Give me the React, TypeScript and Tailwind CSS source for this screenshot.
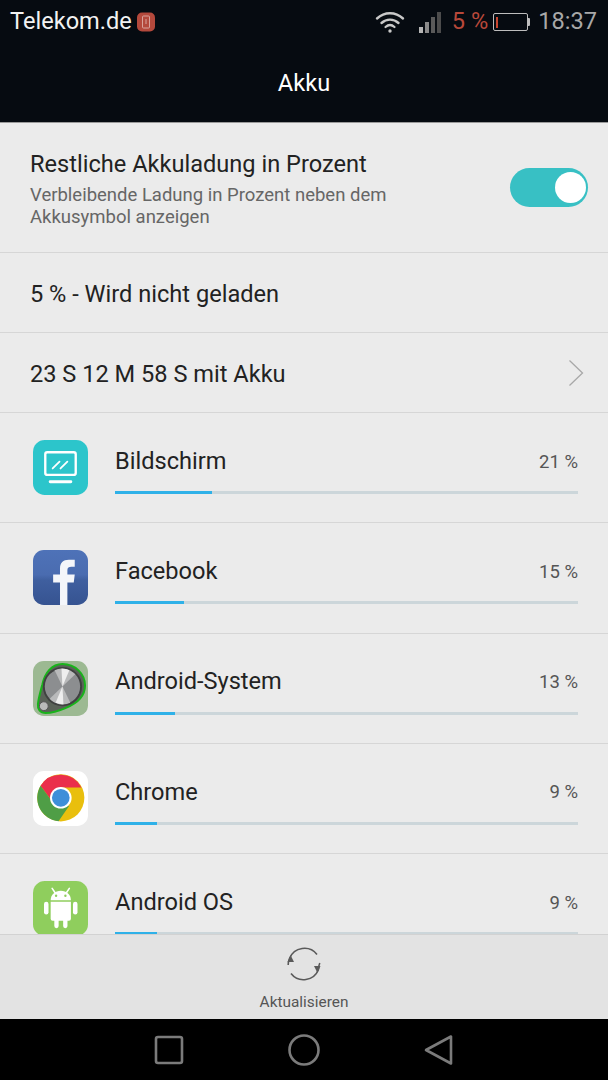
import React from 'react';

type Usage = { name: string; percent: number; bar: string; icon: React.ReactNode };

const BildschirmIcon = () => (
  <svg viewBox="0 0 56 56" className="h-[55px] w-[55px]">
    <rect width="56" height="56" rx="12" fill="#2cc5cb" />
    <rect x="12.500" y="12.500" width="31" height="23" rx="2" fill="none" stroke="#fff" strokeWidth="2.400" />
    <path d="M20 29l7-7M28 29l7-7" stroke="#fff" strokeWidth="1.800" strokeLinecap="round" />
    <rect x="16" y="41" width="24" height="3" rx="1.500" fill="#fff" />
  </svg>
);

const FacebookIcon = () => (
  <svg viewBox="0 0 56 56" className="h-[55px] w-[55px]">
    <defs>
      <linearGradient id="fb" x1="0" y1="0" x2="0" y2="1">
        <stop offset="0" stopColor="#4e72b8" />
        <stop offset="0.45" stopColor="#4a6cb0" />
        <stop offset="0.55" stopColor="#3f5f9f" />
        <stop offset="1" stopColor="#365391" />
      </linearGradient>
    </defs>
    <rect width="56" height="56" rx="11" fill="url(#fb)" />
    <path
      d="M27.500 56V33h-7v-8h7v-6c0-6 3-9 9-9h6v7h-3.500c-2.500 0-4 1-4 3.500V25h7.500l-1 8h-6.500v23z"
      fill="#f4f6fa"
    />
  </svg>
);

const SystemIcon = () => (
  <svg viewBox="0 0 56 56" className="h-[55px] w-[55px]">
    <rect width="56" height="56" rx="11" fill="#9cb992" />
    <path
      d="M30 3c13 0 23 10 23 22 0 13-10 19-20 23-7 3-14 5-20 5-6 0-8.500-4-8-9 .7-7 3-14 4.500-20C12 12 19 3 30 3z"
      fill="#5a6258"
      stroke="#19b31b"
      strokeWidth="2"
    />
    <circle cx="30" cy="26" r="20" fill="#3f4140" />
    <circle cx="30" cy="26" r="18" fill="#8c8e90" />
    {/* brushed metal highlights fan out from the dial centre */}
    <path d="M30 26L22 9.500A18 18 0 0 1 43 13.500z" fill="#b9babb" />
    <path d="M30 26L29 8A18 18 0 0 1 37 9.500z" fill="#eeeeee" />
    <path d="M30 26L38 42.500A18 18 0 0 1 17 38.500z" fill="#b9babb" />
    <path d="M30 26L31 44A18 18 0 0 1 23 42.500z" fill="#eeeeee" />
    <circle cx="11" cy="46" r="4.500" fill="#b9bbb9" stroke="#555" strokeWidth="1" />
  </svg>
);

const ChromeIcon = () => (
  <svg viewBox="0 0 56 56" className="h-[55px] w-[55px]">
    <rect width="56" height="56" rx="11" fill="#fff" />
    <circle cx="28.300" cy="27.300" r="24" fill="#e9bf0d" />
    <path d="M7.700 15A24 24 0 0 1 49.300 16.700H28.300L18 29z" fill="#ea2f4b" />
    <path d="M7.700 15A24 24 0 0 0 26 51.200L36.700 35.700 18 29z" fill="#4f9e46" />
    <circle cx="28.300" cy="27.300" r="11" fill="#fff" />
    <circle cx="28.300" cy="27.300" r="9" fill="#3d8fd9" />
  </svg>
);

const AndroidIcon = () => (
  <svg viewBox="0 0 56 56" className="h-[55px] w-[55px]">
    <rect width="56" height="56" rx="12" fill="#8fce5d" />
    <path d="M19.500 7.500l3 4.500M37 7.500l-3 4.500" stroke="#fff" strokeWidth="1.600" strokeLinecap="round" />
    <path d="M18 19.500c0-5.500 4.500-9.500 10.300-9.500s10.300 4 10.300 9.500z" fill="#fff" />
    <circle cx="23.500" cy="15" r="1.200" fill="#8fce5d" />
    <circle cx="33" cy="15" r="1.200" fill="#8fce5d" />
    <path d="M18 21h20.600v17.500a2 2 0 0 1-2 2H20a2 2 0 0 1-2-2z" fill="#fff" />
    <rect x="11.200" y="21" width="4.600" height="13" rx="2.300" fill="#fff" />
    <rect x="40.700" y="21" width="4.600" height="13" rx="2.300" fill="#fff" />
    <rect x="21.700" y="38" width="4.400" height="10" rx="2.200" fill="#fff" />
    <rect x="30.700" y="38" width="4.400" height="10" rx="2.200" fill="#fff" />
  </svg>
);

const usages: Usage[] = [
  { name: 'Bildschirm', percent: 21, bar: 'w-[21%]', icon: <BildschirmIcon /> },
  { name: 'Facebook', percent: 15, bar: 'w-[15%]', icon: <FacebookIcon /> },
  { name: 'Android-System', percent: 13, bar: 'w-[13%]', icon: <SystemIcon /> },
  { name: 'Chrome', percent: 9, bar: 'w-[9%]', icon: <ChromeIcon /> },
  { name: 'Android OS', percent: 9, bar: 'w-[9%]', icon: <AndroidIcon /> },
];

const StatusBar = () => (
  <div className="flex h-[44px] items-center pl-[10px] pr-[11px]">
    <span className="text-[23.600px] leading-none text-[#f2f2f2]">Telekom.de</span>
    <svg viewBox="0 0 18 20" className="ml-[5px] h-[20px] w-[18px]">
      <rect width="18" height="19" y="0.500" rx="5" fill="#b4493c" />
      <rect x="5.500" y="4" width="7" height="12" rx="1" fill="none" stroke="#d9a49c" strokeWidth="1" />
      <path d="M9 7v5" stroke="#d9a49c" strokeWidth="1" />
    </svg>
    <div className="ml-auto flex items-center">
      <svg viewBox="0 0 30 24" className="h-[24px] w-[30px]" fill="none" stroke="#c9c9c9" strokeLinecap="round">
        <path d="M2 8.500c7.500-7 18.500-7 26 0" strokeWidth="2.400" />
        <path d="M6.500 13c5-4.500 12-4.500 17 0" strokeWidth="2.400" />
        <path d="M10.500 17c2.800-2.500 6.200-2.500 9 0" strokeWidth="2.200" />
        <circle cx="15" cy="21" r="1.700" fill="#c9c9c9" stroke="none" />
      </svg>
      <div className="ml-[14px] flex h-[22px] items-end gap-[2.500px]">
        <span className="h-[6px] w-[3.500px] bg-[#b5b5b5]" />
        <span className="h-[11px] w-[3.500px] bg-[#8a8a8a]" />
        <span className="h-[16px] w-[3.500px] bg-[#5a5a5a]" />
        <span className="h-[21px] w-[3.500px] bg-[#4c4c4c]" />
      </div>
      <span className="ml-[11px] text-[23.600px] leading-none text-[#b8483a]">5 %</span>
      <div className="ml-[5px] flex items-center">
        <div className="flex h-[18px] w-[35px] items-center rounded-[2px] border-[1.500px] border-[#bdbdbd] pl-[2px]">
          <span className="h-[11px] w-[2px] bg-[#c8452f]" />
        </div>
        <span className="h-[8px] w-[2px] rounded-r-[1px] bg-[#bdbdbd]" />
      </div>
      <span className="ml-[8px] text-[23.600px] leading-none text-[#a8a8a8]">18:37</span>
    </div>
  </div>
);

const UsageRow = ({ item }: { item: Usage }) => (
  <div className="flex h-[110.250px] shrink-0 border-b border-[#d6d6d6] pl-[33px] pr-[30px] pt-[27px]">
    <div className="shrink-0">{item.icon}</div>
    <div className="ml-[27px] min-w-0 flex-1">
      <div className="flex h-[42px] items-center justify-between">
        <span className="pt-[1px] text-[23.600px] text-[#222]">{item.name}</span>
        <span className="pt-[3px] text-[18.500px] text-[#555]">{item.percent} %</span>
      </div>
      <div className="mt-[9px] h-[3px] bg-[#ccd6da]">
        <div className={`h-full bg-[#2fb1e8] ${item.bar}`} />
      </div>
    </div>
  </div>
);

export default function App() {
  return (
    <div className="flex h-[1080px] w-[608px] flex-col overflow-hidden bg-[#ebebeb] font-['Roboto',sans-serif]">
      <header className="h-[123px] shrink-0 border-b border-[#9a9a9a] bg-[#060b11]">
        <StatusBar />
        <h1 className="flex h-[78px] items-center justify-center pt-[2px] text-[23.600px] font-normal text-white">Akku</h1>
      </header>

      <main className="min-h-0 flex-1 overflow-hidden">
        <div className="flex h-[130px] items-center justify-between border-b border-[#d6d6d6] pl-[30px] pr-[20px]">
          <div className="pt-[2px]">
            <div className="text-[23.600px] leading-[30px] text-[#222]">Restliche Akkuladung in Prozent</div>
            <div className="mt-[5px] text-[18.500px] leading-[22px] text-[#666]">
              Verbleibende Ladung in Prozent neben dem
              <br />
              Akkusymbol anzeigen
            </div>
          </div>
          <div className="flex h-[39px] w-[78px] items-center justify-end rounded-full bg-[#38c0c4] pr-[2px]">
            <span className="h-[31px] w-[31px] rounded-full bg-white" />
          </div>
        </div>

        <div className="flex h-[80px] items-center border-b border-[#d6d6d6] pl-[30px] pt-[4px] text-[23.600px] text-[#222]">
          5 % - Wird nicht geladen
        </div>

        <div className="flex h-[80px] items-center justify-between border-b border-[#d6d6d6] pl-[30px] pr-[24px] text-[23.600px] text-[#222]">
          <span className="pt-[4px]">23 S 12 M 58 S mit Akku</span>
          <svg viewBox="0 0 16 28" className="h-[28px] w-[16px]" fill="none" stroke="#a8a8a8" strokeWidth="1.300">
            <path d="M1.500 1.500L14.500 14 1.500 26.500" />
          </svg>
        </div>

        {usages.map((item) => (
          <UsageRow key={item.name} item={item} />
        ))}
      </main>

      <div className="flex h-[85px] shrink-0 flex-col items-center border-t border-[#d2d2d2] bg-[#e3e3e3]">
        <svg viewBox="0 0 36 36" className="mt-[11px] h-[36px] w-[36px]" fill="none" stroke="#5a5a5a" strokeWidth="1.600">
          <path d="M3.500 12.500A16 16 0 0 1 31 8.500" />
          <path d="M32.500 23.500A16 16 0 0 1 5 27.500" />
          <path d="M3.500 12.500A16 16 0 0 0 2.200 19" />
          <path d="M33.800 17A16 16 0 0 0 32.500 23.500" />
          <path d="M4.500 9l3.500 7H1.500z" fill="#5a5a5a" stroke="none" />
          <path d="M31.500 27l-3.500-7h6.500z" fill="#5a5a5a" stroke="none" />
        </svg>
        <span className="mt-[11px] text-[15.400px] leading-[18px] text-[#555]">Aktualisieren</span>
      </div>

      <nav className="flex h-[61px] shrink-0 items-center justify-between bg-black pl-[154px] pr-[154px]">
        <svg viewBox="0 0 30 30" className="h-[30px] w-[30px]" fill="none" stroke="#7b7b7b" strokeWidth="2.600">
          <rect x="2" y="2" width="26" height="26" rx="2" />
        </svg>
        <svg viewBox="0 0 34 34" className="h-[34px] w-[34px]" fill="none" stroke="#7b7b7b" strokeWidth="2.600">
          <circle cx="17" cy="17" r="14.500" />
        </svg>
        <svg viewBox="0 0 30 32" className="h-[32px] w-[30px]" fill="none" stroke="#7b7b7b" strokeWidth="2.600" strokeLinejoin="round">
          <path d="M27 2.500v27L2 16z" />
        </svg>
      </nav>
    </div>
  );
}
